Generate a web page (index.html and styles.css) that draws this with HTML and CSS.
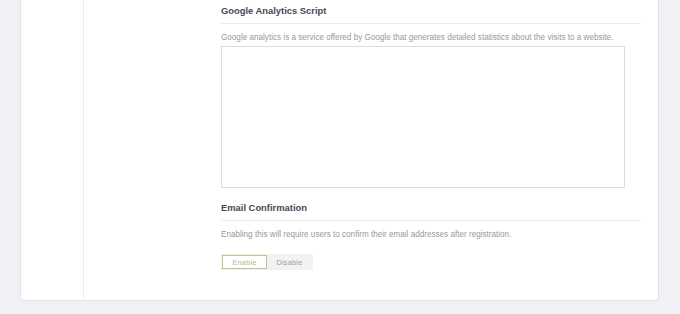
FILE: index.html
```html
<!DOCTYPE html>
<html lang="en">
<head>
    <meta charset="UTF-8">
    <meta name="viewport" content="width=device-width, initial-scale=1.0">
    <title>Settings</title>
    <link rel="stylesheet" href="styles.css">
</head>
<body>
    <div class="card">
        <div class="sidebar"></div>
        <div class="main">
            <div class="section">
                <h2>Google Analytics Script</h2>
                <p class="help">Google analytics is a service offered by Google that generates detailed statistics about the visits to a website.</p>
                <textarea class="script-box"></textarea>
            </div>

            <div class="section">
                <h2>Email Confirmation</h2>
                <p class="help">Enabling this will require users to confirm their email addresses after registration.</p>
                <div class="toggle">
                    <button class="active">Enable</button>
                    <button>Disable</button>
                </div>
            </div>
        </div>
    </div>
</body>
</html>
```

FILE: styles.css
```css
body {
    margin: 0;
    padding: 0 20px 12px 20px;
    background: #f0f0f5;
    font-family: "Liberation Sans", Arial, sans-serif;
}
.card {
    display: flex;
    width: 639px;
    height: 301px;
    background: #fff;
    border: 1px solid #e2e2ea;
    border-top: none;
    border-radius: 0 0 4px 4px;
    box-sizing: border-box;
}
.sidebar {
    width: 62px;
    border-right: 1px solid #ececf0;
}
.main {
    flex: 1;
    padding: 0 17px 0 137px;
}
.section {
    padding-top: 4px;
}
.section + .section {
    padding-top: 13px;
}
h2 {
    margin: 0;
    padding: 0 0 6px 0;
    font-size: 9.4px;
    line-height: 13px;
    color: #474756;
    border-bottom: 1px solid #ececef;
}
.help {
    margin: 9px 0 3px 0;
    font-size: 8.15px;
    line-height: 10px;
    color: #999;
}
.script-box {
    display: block;
    width: 404px;
    height: 142px;
    margin: 0;
    padding: 0;
    border: 1px solid #dcdcdc;
    resize: none;
    box-sizing: border-box;
}
.toggle {
    display: inline-flex;
    margin-top: 11px;
    background: #f2f2f2;
    padding: 1px;
}
.toggle button {
    width: 45px;
    height: 14px;
    padding: 0;
    border: 1.5px solid transparent;
    background: transparent;
    font-family: "Liberation Sans", Arial, sans-serif;
    font-size: 7.2px;
    letter-spacing: 0.3px;
    color: #9a9a9a;
}
.toggle button.active {
    background: #fff;
    border-color: #bcc58f;
    color: #b1ba84;
}
```
